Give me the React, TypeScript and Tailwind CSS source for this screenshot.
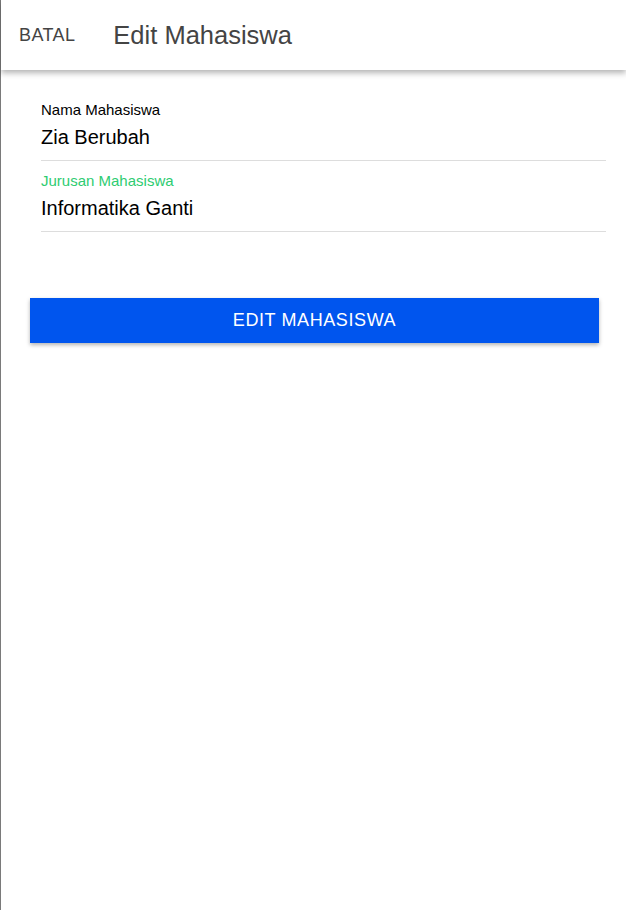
export default function App() {
  return (
    <div className="min-h-[910px] w-full bg-white border-l border-[#7a7a7a] font-['Liberation_Sans',Arial,sans-serif]">
      {/* Header */}
      <div className="relative z-10 flex h-[70px] items-center bg-white shadow-[0_3px_6px_rgba(0,0,0,0.3)]">
        <button type="button" className="ml-[18px] text-[18px] text-[#444] tracking-[0.4px]">
          BATAL
        </button>
        <h1 className="ml-[38px] text-[25.5px] text-[#444]">Edit Mahasiswa</h1>
      </div>

      {/* Form */}
      <div className="pl-[40px] pr-[20px] pt-[31px]">
        <div className="border-b border-[#dddddd] pb-[11px]">
          <label className="block text-[15px] leading-[17px] text-black">Nama Mahasiswa</label>
          <div className="mt-[7px] text-[20px] leading-[24px] text-black">Zia Berubah</div>
        </div>
        <div className="mt-[11px] border-b border-[#dddddd] pb-[11px]">
          <label className="block text-[15px] leading-[17px] text-[#2ecc71]">Jurusan Mahasiswa</label>
          <div className="mt-[7px] text-[20px] leading-[24px] text-black">Informatika Ganti</div>
        </div>
      </div>

      <div className="pl-[29px] pr-[27px] pt-[66px]">
        <button
          type="button"
          className="flex h-[45px] w-full items-center justify-center bg-[#0055ee] text-[18px] tracking-[0.6px] text-white shadow-[0_2px_4px_rgba(0,0,0,0.3)]"
        >
          EDIT MAHASISWA
        </button>
      </div>
    </div>
  );
}
